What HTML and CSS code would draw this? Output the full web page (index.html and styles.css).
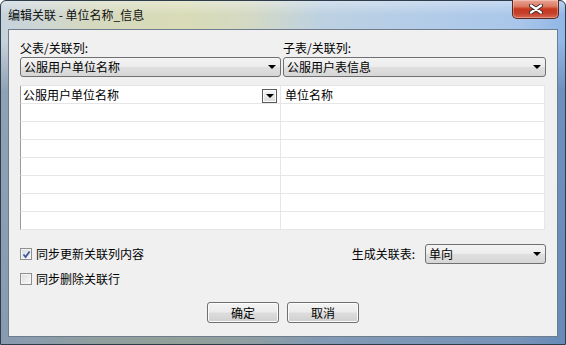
FILE: index.html
```html
<!DOCTYPE html>
<html lang="zh">
<head>
<meta charset="utf-8">
<link rel="stylesheet" href="styles.css">
</head>
<body>
<div class="window">
  <div class="titlebar">
    <span class="title">编辑关联 - 单位名称_信息</span>
    <div class="close">
      <svg width="14" height="10" viewBox="0 0 14 10">
        <path d="M2 1.5 L12 8.5 M12 1.5 L2 8.5" stroke="#3a2a2a" stroke-width="4" stroke-linecap="round"/>
        <path d="M2 1.5 L12 8.5 M12 1.5 L2 8.5" stroke="#ffffff" stroke-width="2.2" stroke-linecap="round"/>
      </svg>
    </div>
  </div>
  <div class="client">
    <div class="cols">
      <div class="col">
        <div class="label">父表/关联列:</div>
        <div class="combo"><span>公服用户单位名称</span><i class="arrow"></i></div>
      </div>
      <div class="col">
        <div class="label">子表/关联列:</div>
        <div class="combo"><span>公服用户表信息</span><i class="arrow"></i></div>
      </div>
    </div>
    <div class="grid">
      <div class="row">
        <div class="cell left first"><span>公服用户单位名称</span><span class="cellbtn"><i class="arrow"></i></span></div>
        <div class="cell right"><span>单位名称</span></div>
      </div>
      <div class="row"><div class="cell left"></div><div class="cell right"></div></div>
      <div class="row"><div class="cell left"></div><div class="cell right"></div></div>
      <div class="row"><div class="cell left"></div><div class="cell right"></div></div>
      <div class="row"><div class="cell left"></div><div class="cell right"></div></div>
      <div class="row"><div class="cell left"></div><div class="cell right"></div></div>
      <div class="row"><div class="cell left"></div><div class="cell right"></div></div>
      <div class="row"><div class="cell left"></div><div class="cell right"></div></div>
    </div>
    <div class="opts">
      <div class="optrow">
        <label class="check"><span class="box checked">
          <svg width="9" height="9" viewBox="0 0 9 9"><path d="M1.5 4.5 L3.6 7 L7.6 1.5" fill="none" stroke="#3d5898" stroke-width="1.8"/></svg>
        </span>同步更新关联列内容</label>
        <div class="gen">
          <span class="genlabel">生成关联表:</span>
          <div class="combo small"><span>单向</span><i class="arrow"></i></div>
        </div>
      </div>
      <div class="optrow second">
        <label class="check"><span class="box"></span>同步删除关联行</label>
      </div>
    </div>
    <div class="buttons">
      <div class="btn">确定</div>
      <div class="btn">取消</div>
    </div>
  </div>
</div>
</body>
</html>
```
FILE: styles.css
```css
* { box-sizing: border-box; }
html, body { margin: 0; padding: 0; }
body {
  width: 566px;
  height: 345px;
  overflow: hidden;
  font-family: "Noto Sans CJK SC", "Noto Sans", sans-serif;
  font-size: 12px;
  color: #000;
  background: #fff;
}
.window {
  width: 566px;
  height: 345px;
  border: 1px solid #2e3c4c;
  border-radius: 6px 6px 0 0;
  padding: 0 7px 7px 7px;
  display: flex;
  flex-direction: column;
  background:
    linear-gradient(180deg, rgba(255,255,255,0.35) 0px, rgba(255,255,255,0) 14px),
    linear-gradient(180deg, rgba(40,70,110,0) 0px, rgba(40,70,110,0) 40px, rgba(40,70,110,0.35) 90px, rgba(40,70,110,0.4) 345px),
    linear-gradient(90deg, #c6d2dc 0px, #cdd6d4 40px, #d5d9bf 90px, #d9dcb6 180px, #d3d9c4 250px, #bdd1e2 320px, #b3cce8 420px, #a9c6ea 520px, #8fb6e6 566px);
}
.titlebar {
  height: 28px;
  display: flex;
  align-items: center;
  flex-shrink: 0;
}
.title {
  font-size: 12px;
  line-height: 14px;
  margin-top: -1px;
  color: #101010;
}
.close {
  margin-left: auto;
  margin-right: -1px;
  align-self: flex-start;
  margin-top: -1px;
  width: 47px;
  height: 19px;
  border: 1px solid #5a2820;
  border-top: none;
  border-radius: 0 0 5px 5px;
  background: linear-gradient(180deg, #eaa493 0%, #dc7a64 35%, #c7381f 50%, #c6402a 75%, #d86a52 100%);
  display: flex;
  align-items: center;
  justify-content: center;
  box-shadow: inset 0 0 0 1px rgba(255,255,255,0.3);
}
.client {
  flex: 1;
  border: 1px solid #6f7c8c;
  background: #f0f0f0;
  padding: 11px 11px 0 11px;
  display: flex;
  flex-direction: column;
}
.cols {
  display: flex;
  gap: 2px;
}
.col:first-child { width: 261px; }
.col:last-child { width: 263px; }
.label {
  line-height: 14px;
  height: 14px;
  margin-bottom: 2px;
}
.combo {
  height: 20px;
  border: 1px solid #707070;
  border-radius: 3px;
  background: linear-gradient(180deg, #f4f4f4 0%, #ececec 48%, #dfdfdf 52%, #d6d6d6 100%);
  display: flex;
  align-items: center;
  padding: 0 4px 0 3px;
  line-height: 14px;
}
.combo .arrow { margin-left: auto; }
.arrow {
  display: block;
  width: 0;
  height: 0;
  border-left: 4px solid transparent;
  border-right: 4px solid transparent;
  border-top: 4px solid #000;
}
.grid {
  margin-top: 8px;
  width: 525px;
  border-top: 1px solid #e3e3e3;
  display: flex;
  flex-direction: column;
}
.row {
  display: flex;
  height: 18px;
}
.cell {
  height: 18px;
  background: #fff;
  border-bottom: 1px solid #e6e6e6;
  display: flex;
  align-items: center;
  line-height: 14px;
}
.cell.left {
  width: 261px;
  border-left: 1px solid #9a9a9a;
  border-right: 1px solid #e6e6e6;
  padding-left: 2px;
}
.cell.right {
  width: 264px;
  border-right: 1px solid #e6e6e6;
  padding-left: 4px;
}
.cell.first { padding-right: 3px; }
.cellbtn {
  margin-left: auto;
  width: 15px;
  height: 14px;
  margin-top: 3px;
  border: 1px solid #5a5a5a;
  background: linear-gradient(180deg, #f6f6f6, #dcdcdc);
  box-shadow: inset 0 0 0 1px #fdfdfd;
  display: flex;
  align-items: center;
  justify-content: center;
}
.opts {
  margin-top: 14px;
  display: flex;
  flex-direction: column;
}
.optrow {
  display: flex;
  align-items: center;
  height: 20px;
}
.optrow.second {
  margin-top: 8px;
  height: 14px;
}
.check {
  display: flex;
  align-items: center;
  margin-left: 0;
  line-height: 14px;
}
.box {
  width: 12px;
  height: 12px;
  border: 1px solid #8e8f8f;
  background: linear-gradient(135deg, #dcdcdc, #fbfbfb);
  box-shadow: inset 0 0 0 1px #f4f4f4;
  margin-right: 4px;
  display: flex;
  align-items: center;
  justify-content: center;
}
.box.checked { background: linear-gradient(135deg, #d6d9df, #f8f8f8); }
.gen {
  margin-left: auto;
  display: flex;
  align-items: center;
}
.genlabel {
  line-height: 14px;
  margin-right: 10px;
}
.combo.small { width: 121px; }
.buttons {
  margin-top: 16px;
  display: flex;
  justify-content: center;
  gap: 8px;
}
.btn {
  width: 72px;
  height: 21px;
  border: 1px solid #707070;
  border-radius: 3px;
  background: linear-gradient(180deg, #f3f3f3 0%, #ebebeb 48%, #dddddd 52%, #cfcfcf 100%);
  box-shadow: inset 0 0 0 1px #fbfbfb;
  display: flex;
  align-items: center;
  justify-content: center;
  line-height: 14px;
}
```
